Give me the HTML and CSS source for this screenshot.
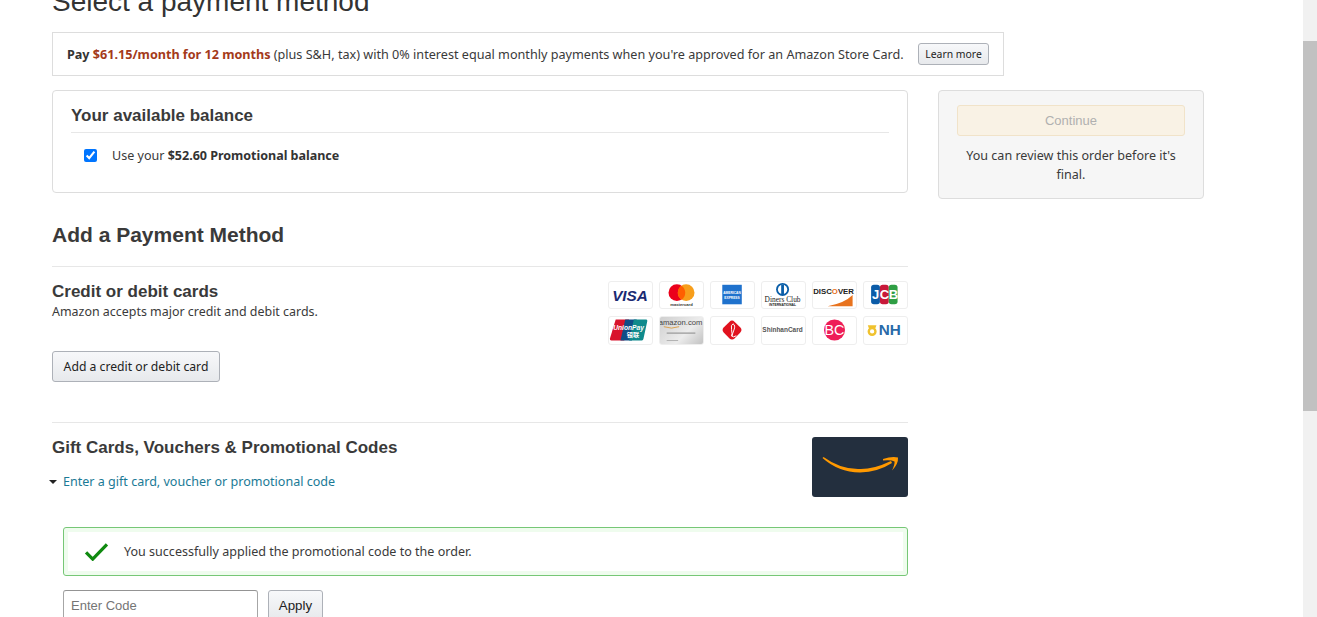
FILE: index.html
```html
<!DOCTYPE html>
<html lang="en">
<head>
<meta charset="utf-8">
<title>Select a payment method</title>
<link rel="stylesheet" href="styles.css">
</head>
<body>
<div class="viewport">
  <main class="page">
    <h1 class="title">Select a payment method</h1>
    <div class="promo">
      <p class="promo-text"><b>Pay</b> <b class="price">$61.15/month for 12 months</b> (plus S&amp;H, tax) with 0% interest equal monthly payments when you're approved for an Amazon Store Card.</p>
      <button class="btn btn-small">Learn more</button>
    </div>
    <div class="columns">
      <div class="left">
        <section class="balance">
          <h2 class="balance-title">Your available balance</h2>
          <label class="balance-row">
            <input class="check" type="checkbox" checked>
            <span>Use your <b>$52.60 Promotional balance</b></span>
          </label>
        </section>
        <h2 class="add-title">Add a Payment Method</h2>
        <section class="cards-section">
          <div class="cards-info">
            <h3 class="sub-title">Credit or debit cards</h3>
            <p class="sub-text">Amazon accepts major credit and debit cards.</p>
          </div>
          <div class="logos">
            <div class="logo"><svg viewBox="0 0 45 28"><text x="22" y="20" text-anchor="middle" class="t-visa">VISA</text></svg></div>
            <div class="logo"><svg viewBox="0 0 45 28"><circle cx="17.5" cy="11.500" r="9" fill="#eb001b"/><circle cx="27.5" cy="11.500" r="9" fill="#f79e1b"/><path d="M22.5 4a9 9 0 0 1 0 15a9 9 0 0 1 0-15z" fill="#ff5f00"/><text x="22.5" y="26" text-anchor="middle" class="t-mc">mastercard</text></svg></div>
            <div class="logo"><svg viewBox="0 0 45 28"><rect x="11.500" y="3" width="21" height="21" fill="#1f72cd"/><text x="22" y="13" text-anchor="middle" class="t-amex">AMERICAN</text><text x="22" y="18" text-anchor="middle" class="t-amex">EXPRESS</text></svg></div>
            <div class="logo"><svg viewBox="0 0 45 28"><circle cx="21.500" cy="8" r="7" fill="#0a5ea8"/><circle cx="21.500" cy="8" r="5" fill="#fff"/><rect x="20" y="3" width="3" height="10" fill="#0a5ea8"/><text x="21.500" y="21" text-anchor="middle" class="t-din">Diners Club</text><text x="21.500" y="25.500" text-anchor="middle" class="t-din2">INTERNATIONAL</text></svg></div>
            <div class="logo"><svg viewBox="0 0 45 28"><path d="M42 14V26H15Q33 23 42 14z" fill="#e8731e"/><text x="21.500" y="13" text-anchor="middle" class="t-disc">DISC<tspan fill="#e8731e">O</tspan>VER</text></svg></div>
            <div class="logo"><svg viewBox="0 0 45 28"><rect x="7" y="3" width="9.500" height="21" rx="3" fill="#0b5ca8"/><rect x="16.500" y="3" width="9.500" height="21" rx="3" fill="#c8193a"/><rect x="26" y="3" width="9.500" height="21" rx="3" fill="#2f9e44"/><text x="12" y="18.500" text-anchor="middle" class="t-jcb">J</text><text x="21.500" y="18.500" text-anchor="middle" class="t-jcb">C</text><text x="31" y="18.500" text-anchor="middle" class="t-jcb">B</text></svg></div>
            <div class="logo"><svg viewBox="0 0 45 28"><path d="M7 2.500h14l-5 22H2.500Q.5 24.500 1 22.500z" fill="#d8132c"/><path d="M17 2.500h12l-5 22H12z" fill="#0f4c86"/><path d="M26 2.500h13q1.500 0 1 2l-4 18.500q-.3 1.500-1.500 1.500H21z" fill="#0f8a8c"/><text x="20.500" y="13" text-anchor="middle" class="t-up">UnionPay</text><text x="25" y="21" text-anchor="middle" class="t-up2">银联</text></svg></div>
            <div class="logo logo-amazon"><svg viewBox="0 0 45 28"><text x="21.500" y="8.500" text-anchor="middle" class="t-az">amazon.com</text><path d="M4 10q8 3 16 0" stroke="#d9a04a" fill="none"/><rect x="7" y="16" width="30" height="1.500" fill="#a5a5a5"/><rect x="7" y="24" width="12" height="1" fill="#b0b0b0"/></svg></div>
            <div class="logo"><svg viewBox="0 0 45 28"><rect x="14" y="5.500" width="16" height="16" rx="4" transform="rotate(45 22 13.500)" fill="#e1121e"/><path d="M23 7q3 1.500 1 6.500t-2 6.500q1 1.500 4.500-.5M23 7q-2.500 1-1.500 6t0 7" stroke="#fff" fill="none"/></svg></div>
            <div class="logo"><svg viewBox="0 0 45 28"><text x="21.500" y="16" text-anchor="middle" class="t-sh">ShinhanCard</text></svg></div>
            <div class="logo"><svg viewBox="0 0 45 28"><circle cx="22.500" cy="13.500" r="11" fill="#ee1c57"/><text x="22.500" y="18.500" text-anchor="middle" class="t-bc">BC</text></svg></div>
            <div class="logo"><svg viewBox="0 0 45 28"><circle cx="8.500" cy="15" r="3.500" fill="none" stroke="#f0c22e" stroke-width="2.500"/><path d="M4 8.500h9l-1 3H5z" fill="#f0c22e"/><text x="27" y="19" text-anchor="middle" class="t-nh">NH</text></svg></div>
          </div>
          <button class="btn btn-add">Add a credit or debit card</button>
        </section>
        <section class="gift">
          <div class="gift-main">
            <h3 class="gift-title">Gift Cards, Vouchers &amp; Promotional Codes</h3>
            <a class="gift-link" href="#"><span class="caret"></span>Enter a gift card, voucher or promotional code</a>
          </div>
          <div class="gift-card"><svg viewBox="0 0 96 60"><path d="M10.500 21Q26 35 48 35.500Q66 35 80 26L79 24Q60 33 46 32Q28 32 11.500 20z" fill="#f90"/><path d="M71 22Q80 19 86 20.500Q86.500 27 80 33.500Q83 27 82.500 24.500Q79 22.500 71 23.500z" fill="#f90"/></svg></div>
        </section>
        <div class="applied">
          <div class="success">
            <svg class="tick" viewBox="0 0 26 20"><path d="M2 11l7 7L24 2.500" fill="none" stroke="#108a10" stroke-width="3.400"/></svg>
            <span>You successfully applied the promotional code to the order.</span>
          </div>
          <div class="code-row">
            <input class="code-input" type="text" placeholder="Enter Code">
            <button class="btn btn-apply">Apply</button>
          </div>
        </div>
      </div>
      <aside class="side">
        <button class="continue" disabled>Continue</button>
        <p class="side-text">You can review this order before it's final.</p>
      </aside>
    </div>
  </main>
  <div class="scrollbar"><div class="thumb"></div></div>
</div>
</body>
</html>
```
FILE: styles.css
```css
* { box-sizing: border-box; }
html, body { margin: 0; height: 100%; overflow: hidden; background: #fff; }
body { font-family: "Noto Sans", "Liberation Sans", sans-serif; font-size: 12.55px; line-height: 18px; color: #3a3a3a; }
p, h1, h2, h3 { margin: 0; }
b { color: #333; }
.viewport { display: flex; height: 617px; overflow: hidden; }
.page { flex: 1; min-width: 0; padding-left: 52px; height: 617px; overflow: hidden; }
.title { font: 400 28px/36px "Liberation Sans", Arial, sans-serif; color: #333; margin-top: -16px; margin-bottom: 12px; }
.promo { width: 952px; height: 44px; border: 1px solid #ddd; display: flex; align-items: center; justify-content: space-between; padding: 0 14px; white-space: nowrap; }
.promo-text { font-size: 12.63px; }
.promo-text b { letter-spacing: -.02px; }
.promo-text .price { color: #a43a1a; }
.btn { font-family: "Noto Sans", "Liberation Sans", sans-serif; color: #222; border: 1px solid #adb1b8; border-radius: 3px; background: linear-gradient(#f7f8fa, #e7e9ec); padding: 0; }
.btn-small { width: 71px; height: 22px; font-size: 10.4px; line-height: 18px; }
.columns { display: grid; grid-template-columns: 856px 266px; column-gap: 30px; margin-top: 14px; align-items: start; }
.balance { height: 103px; border: 1px solid #ddd; border-radius: 4px; padding: 13px 18px 0; }
.balance-title { font: 700 17px/24px "Liberation Sans", Arial, sans-serif; padding-bottom: 4px; border-bottom: 1px solid #e7e7e7; }
.balance-row { display: flex; align-items: center; gap: 15px; padding: 14px 0 0 13px; }
.balance-row b { letter-spacing: -.03px; }
.check { margin: 0 0 2px; width: 13px; height: 13px; accent-color: #0075ff; }
.add-title { font: 700 21px/28px "Liberation Sans", Arial, sans-serif; margin-top: 28px; padding-bottom: 17px; border-bottom: 1px solid #e7e7e7; }
.cards-section { display: grid; grid-template-columns: 1fr 300px; grid-template-rows: 70px auto; padding-top: 14px; height: 156px; border-bottom: 1px solid #e7e7e7; }
.sub-title { font: 700 17px/22px "Liberation Sans", Arial, sans-serif; }
.sub-text { font-size: 12.45px; line-height: 18px; }
.logos { grid-row: 1 / span 2; grid-column: 2; display: grid; grid-template-columns: repeat(6, 45px); grid-template-rows: 28px 29px; gap: 7px 6px; align-self: start; }
.logo { border: 1px solid #eee; border-radius: 3px; overflow: hidden; background: #fff; }
.logo svg { display: block; width: 43px; height: 100%; }
.logo-amazon { background: linear-gradient(135deg, #cfcfcf, #ececec 60%, #c2c2c2); }
.logo text { font-family: "Liberation Sans", Arial, sans-serif; }
.logo .t-visa { font-size: 16.500px; font-weight: 700; font-style: italic; fill: #1a2a72; }
.logo .t-mc { font-size: 4.500px; font-weight: 700; fill: #333; }
.logo .t-amex { font-size: 3.500px; font-weight: 700; fill: #fff; }
.logo .t-din { font-family: "Liberation Serif", serif; font-size: 8px; fill: #222; }
.logo .t-din2 { font-size: 3.600px; font-weight: 700; fill: #222; }
.logo .t-disc { font-size: 8.400px; font-weight: 700; fill: #222; }
.logo .t-jcb { font-size: 14px; font-weight: 700; fill: #fff; }
.logo .t-up { font-size: 7px; font-weight: 700; font-style: italic; fill: #fff; }
.logo .t-up2 { font-family: "Noto Sans CJK SC", sans-serif; font-size: 6.500px; font-weight: 700; fill: #fff; }
.logo .t-az { font-size: 8px; fill: #444; }
.logo .t-sh { font-size: 6.800px; font-weight: 700; fill: #555; }
.logo .t-bc { font-size: 15px; fill: #fff; }
.logo .t-nh { font-size: 16px; font-weight: 700; fill: #2a6aa8; }
.btn-add { grid-row: 2; grid-column: 1; justify-self: start; width: 168px; height: 31px; font-size: 12.2px; }
.gift { display: flex; justify-content: space-between; padding-top: 14px; height: 90px; }
.gift-title { font: 700 17px/21px "Liberation Sans", Arial, sans-serif; }
.gift-link { display: flex; align-items: center; color: #1b7a96; text-decoration: none; margin-top: 15px; margin-left: -3px; }
.caret { width: 0; height: 0; border: 4px solid transparent; border-top-color: #222; border-bottom: 0; margin-right: 6px; }
.gift-card { width: 96px; height: 60px; background: #232f3e; border-radius: 3px; }
.gift-card svg { display: block; width: 96px; height: 60px; }
.applied { margin: 14px 0 0 11px; }
.success { height: 49px; border: 1px solid #76c776; border-radius: 3px; box-shadow: inset 0 0 0 4px #effcee; display: flex; align-items: center; gap: 15px; padding-left: 20px; }
.tick { width: 25px; height: 19px; }
.code-row { display: flex; gap: 10px; margin-top: 14px; }
.code-input { width: 195px; height: 31px; border: 1px solid #a6a6a6; border-top-color: #949494; border-radius: 3px; font: 13px "Liberation Sans", Arial, sans-serif; padding: 0 7px 1px; }
.code-input::placeholder { color: #757575; opacity: 1; }
.btn-apply { width: 55px; height: 31px; font: 13.3px "Liberation Sans", Arial, sans-serif; }
.side { height: 109px; background: #f6f6f6; border: 1px solid #ddd; border-radius: 4px; padding: 14px 18px 0; text-align: center; }
.continue { display: block; width: 100%; height: 31px; border: 1px solid #f1e3c9; border-radius: 3px; background: #f9f2e5; color: #b0b0b0; font: 13px "Liberation Sans", Arial, sans-serif; padding: 0 0 1px; }
.side-text { margin-top: 10px; line-height: 19px; }
.scrollbar { flex: none; width: 14px; background: #f1f1f1; }
.thumb { margin-top: 41px; height: 370px; background: #c1c1c1; }
```
